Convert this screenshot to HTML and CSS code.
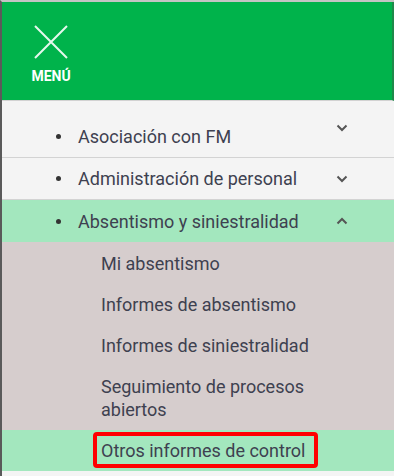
FILE: index.html
```html
<!DOCTYPE html>
<html lang="es">
<head>
  <meta charset="UTF-8">
  <meta name="viewport" content="width=device-width, initial-scale=1.0">
  <title>Menú</title>
  <link rel="stylesheet" href="styles.css">
</head>
<body>
  <div class="side-menu">
    <div class="menu-header">
      <button class="menu-close" type="button">
        <svg class="close-icon" width="34" height="34" viewBox="0 0 34 34">
          <path d="M1 1 L33 33 M33 1 L1 33" stroke="#fff" stroke-width="2" fill="none" stroke-opacity="0.9"/>
        </svg>
        <span class="menu-label">MENÚ</span>
      </button>
    </div>
    <ul class="menu-list">
      <li class="menu-item first">
        <span class="dot"></span>
        <span class="item-text">Asociación con FM</span>
        <svg class="chevron" width="12" height="8" viewBox="0 0 12 8"><path d="M1.5 1.5 L6 6 L10.5 1.5" stroke="#555" stroke-width="2" fill="none"/></svg>
      </li>
      <li class="menu-item">
        <span class="dot"></span>
        <span class="item-text">Administración de personal</span>
        <svg class="chevron" width="12" height="8" viewBox="0 0 12 8"><path d="M1.5 1.5 L6 6 L10.5 1.5" stroke="#555" stroke-width="2" fill="none"/></svg>
      </li>
      <li class="menu-item open">
        <span class="dot"></span>
        <span class="item-text">Absentismo y siniestralidad</span>
        <svg class="chevron" width="12" height="8" viewBox="0 0 12 8"><path d="M1.5 6.5 L6 2 L10.5 6.5" stroke="#555" stroke-width="2" fill="none"/></svg>
      </li>
      <li class="submenu">
        <ul>
          <li class="sub-item">Mi absentismo</li>
          <li class="sub-item">Informes de absentismo</li>
          <li class="sub-item">Informes de siniestralidad</li>
          <li class="sub-item">Seguimiento de procesos<br>abiertos</li>
          <li class="sub-item active"><a class="marked" href="#">Otros informes de control</a></li>
        </ul>
      </li>
    </ul>
  </div>
</body>
</html>
```

FILE: styles.css
```css
body { margin: 0; font-family: Roboto, "Liberation Sans", sans-serif; background: #f4f4f4; }
.side-menu { height: 476px; border-top: 2px solid #c4c4c4; border-left: 2px solid #5a5a5a; background: #f4f4f4; overflow: hidden; }
.menu-header { height: 99px; background: #00b34b; border-right: 2px solid #1f8a4a; border-bottom: 1px solid #d2d2d2; padding: 23px 0 0 22px; box-sizing: border-box; }
.menu-close { background: none; border: none; padding: 0; display: flex; flex-direction: column; align-items: center; width: 54px; cursor: pointer; }
.close-icon { display: block; }
.menu-label { color: #fff; font-family: Roboto, "Liberation Sans", sans-serif; font-weight: 700; font-size: 14px; line-height: 16px; margin-top: 9px; letter-spacing: 0; }
.menu-list { list-style: none; margin: 0; padding: 0; }
.menu-item { display: flex; align-items: center; height: 42px; padding: 0 46px 0 54px; border-bottom: 1px solid #d3d3d3; color: #3e4150; font-size: 18px; box-sizing: border-box; }
.menu-item.first { height: 57px; padding-top: 14px; }
.menu-item.first .chevron { margin-top: -16px; }
.menu-item.open { background: #a3e7be; border-bottom: none; }
.dot { width: 5px; height: 5px; border-radius: 50%; background: #333; margin-right: 17px; }
.item-text { flex: 1; }
.submenu { background: #d6cdcd; }
.submenu ul { list-style: none; margin: 0; padding: 0; }
.sub-item { padding: 9px 0 9px 99px; line-height: 23px; color: #3e4150; font-size: 18px; }
.sub-item:first-child { padding-top: 10px; }
.sub-item.active { background: #a3e7be; }
.marked { position: relative; color: inherit; text-decoration: none; }
.marked::after { content: ""; position: absolute; left: -8px; right: -12px; top: -8px; bottom: -7px; border: 4px solid #ff0000; border-radius: 4px; }
```
